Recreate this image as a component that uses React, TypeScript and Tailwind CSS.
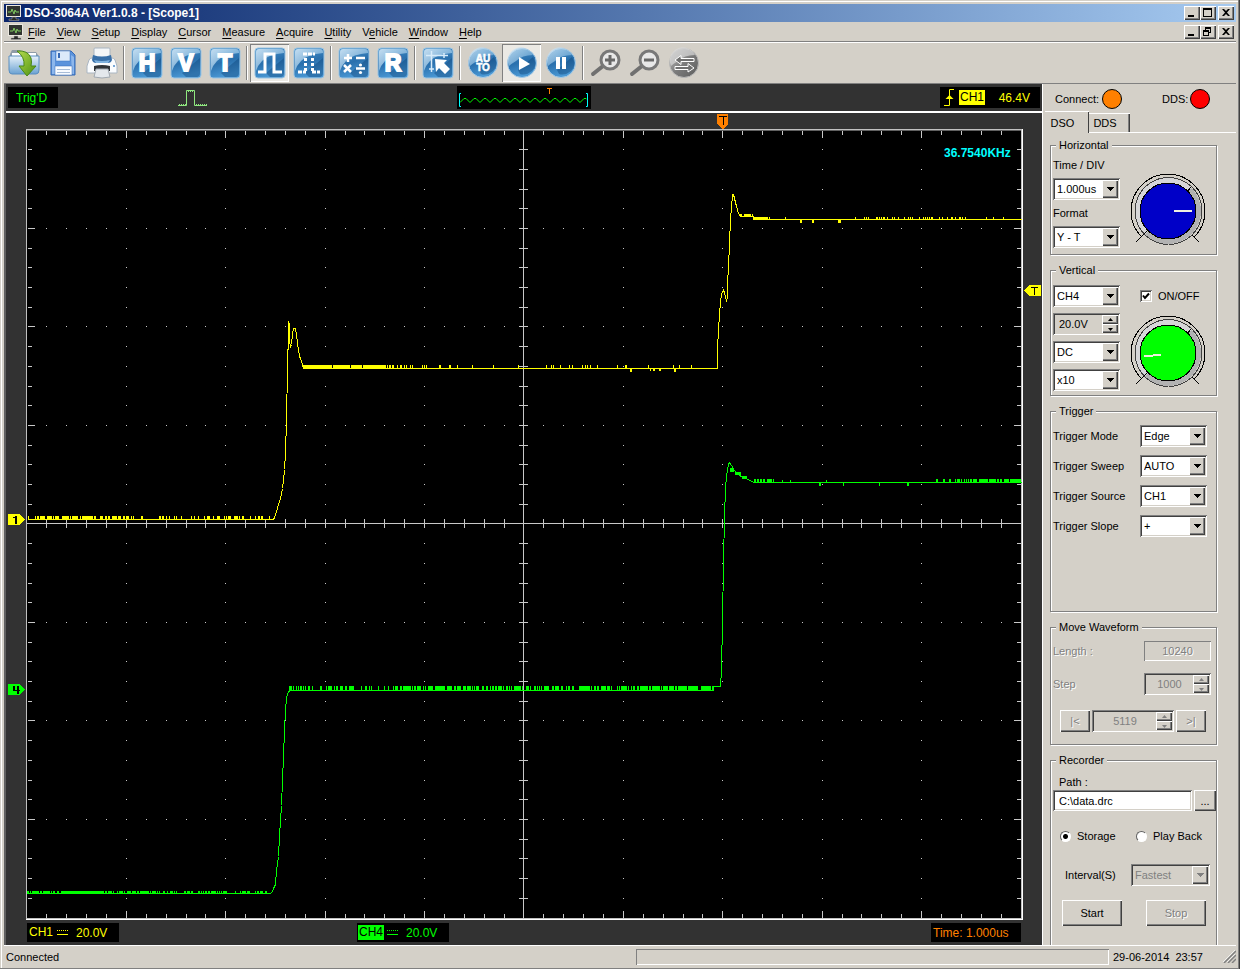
import { useState, useId } from 'react';
import type { ReactNode } from 'react';

const RAISED = 'bg-[#d4d0c8] shadow-[inset_1px_1px_0_#fff,inset_-1px_-1px_0_#404040,inset_-2px_-2px_0_#808080]';
const SUNKEN = 'shadow-[inset_1px_1px_0_#808080,inset_-1px_-1px_0_#fff,inset_2px_2px_0_#404040,inset_-2px_-2px_0_#d4d0c8]';
const ETCHED = 'text-[#808080] [text-shadow:1px_1px_0_#fff]';

/* ---------- graticule ---------- */

const gx = (k: number) => Math.floor(26.98 + 19.88 * k);
const gy = (k: number) => Math.floor(129.9 + 19.7 * k);

function buildGrid() {
  let ticks = '';
  let dots = '';
  for (let k = 1; k < 50; k++) {
    const x = gx(k);
    const len = k % 5 === 0 ? 7 : 4;
    ticks += `M${x} 131h1v${len}h-1zM${x} 918h1v${-len}h-1z`;
    if (k !== 25) ticks += `M${x} 519h1v9h-1z`;
    for (let j = 5; j < 40; j += 5) if (j !== 20) dots += `M${x} ${gy(j)}h1v1h-1z`;
  }
  for (let j = 1; j < 40; j++) {
    const y = gy(j);
    const len = j % 5 === 0 ? 7 : 4;
    ticks += `M28 ${y}h${len}v1h${-len}zM1021 ${y}h${-len}v1h${len}z`;
    if (j !== 20) ticks += `M519 ${y}h9v1h-9z`;
    for (let k = 5; k < 50; k += 5) if (k !== 25) dots += `M${gx(k)} ${y}h1v1h-1z`;
  }
  return ticks + dots;
}

// each run: from, to, height of the hash (negative = up), share of columns hit
type Run = [number, number, number, number];

function noise(y: number, runs: Run[], seed: number) {
  let s = seed;
  let d = '';
  for (const [from, to, h, share] of runs) {
    for (let x = from; x < to; x++) {
      s = (s * 1103515245 + 12345) % 2147483648;
      if (s / 2147483648 < share) d += `M${x} ${y}h1v${h}h-1z`;
    }
  }
  return d;
}

const GRID = buildGrid();

const CH1_TRACE =
  '27,519 273,519 274,517 276,511 278,504 280,498 281,493 282,488 283,480 284,469 285,453 286,420 287,368 288,331 288,321 289,325 289,340 290,346 291,344 292,334 293,328 295,328 296,334 297,343 298,350 299,355 300,359 301,360 302,365 303,368 717,368 717,348 718,330 719,314 720,302 721,293 722,292 723,290 724,292 725,297 726,300 727,297 727,284 728,266 729,243 730,219 731,207 732,194 733,194 734,198 736,206 738,213 740,216 753,216 754,219 1021,219';
const CH4_TRACE =
  '27,893 270,893 272,891 273,888 275,884 276,870 278,856 279,835 281,805 282,780 284,730 285,710 286,697 287,694 288,691 290,690 713,690 713,686 720,686 721,669 722,622 723,563 724,515 725,488 726,476 727,470 728,464 729,462 731,465 734,470 737,473 742,477 748,479 753,482 1021,482';

const CH1_NOISE =
  noise(520, [[27, 40, -4, 0.5], [40, 76, -4, 0.75], [76, 130, -4, 0.6], [130, 273, -4, 0.27]], 7) +
  noise(369, [[303, 360, -4, 0.97], [360, 385, -4, 0.92], [385, 407, -4, 0.5], [407, 440, -4, 0.25], [440, 715, -4, 0.07], [630, 632, 3, 1], [646, 661, 2, 0.5], [674, 676, 3, 1]], 21) +
  noise(217, [[740, 753, -3, 0.8]], 3) +
  noise(220, [[753, 768, -3, 0.9], [768, 790, -3, 0.15], [800, 802, 3, 1], [812, 814, 3, 1], [838, 841, 3, 1], [853, 878, -3, 0.1], [878, 970, -3, 0.38], [970, 1021, -3, 0.1]], 11);
const CH4_NOISE =
  noise(894, [[27, 62, -3, 0.6], [62, 100, -3, 1], [100, 160, -3, 0.75], [160, 270, -3, 0.45]], 5) +
  noise(691, [[288, 340, -5, 0.55], [340, 395, -5, 0.35], [395, 500, -5, 0.7], [500, 640, -5, 0.5], [640, 713, -5, 0.88]], 17) +
  noise(472, [[730, 734, -4, 1]], 9) +
  noise(475, [[735, 741, -3, 1]], 9) +
  noise(479, [[742, 747, -3, 1]], 9) +
  noise(483, [[753, 774, -4, 0.6], [774, 930, -3, 0.03], [819, 821, 3, 1], [843, 844, 3, 1], [879, 880, 3, 1], [907, 909, 3, 1], [930, 970, -4, 0.35], [970, 1021, -4, 0.8]], 13);

function Graticule() {
  return (
    <svg viewBox="6 113 1036 809" className="block w-full h-auto" shapeRendering="crispEdges" role="img" aria-label="Scope1 waveforms">
      <path d="M26 129h997v791h-997z" fill="#fff" />
      <path d="M26 129h996v790h-996z" fill="#c0c0c0" />
      <path d="M27 130h994v788h-994z" fill="#606060" />
      <path d="M27 131h994v787h-994z" fill="#000" />
      <path d={GRID} fill="#c8c8c8" />
      <path d="M27 523h994v1h-994zM523 130h1v788h-1z" fill="#c8c8c8" />
      <g transform="translate(.5 .5)" fill="none" strokeWidth="1">
        <polyline points={CH1_TRACE} stroke="#ff0" />
        <polyline points={CH4_TRACE} stroke="#0f0" />
      </g>
      <path d={CH1_NOISE} fill="#ff0" />
      <path d={CH4_NOISE} fill="#0f0" />

      {/* trigger and channel position markers */}
      <path d="M717 114h11v10l-5 5h-1l-5-5z" fill="#ff8000" />
      <path d="M719 116h8v1h-3v8h-1v-8h-4z" fill="#000" />
      <path d="M1024 290.500l5-5.500h12v11h-12z" fill="#ff0" />
      <path d="M1031 287h7v1h-3v7h-1v-7h-3z" fill="#000" />
      <path d="M8 514h12l5 5.500l-5 5.500h-12z" fill="#ff0" />
      <path d="M13 517h2v-1h2v8h-2v-6h-2z" fill="#000" />
      <path d="M8 684h12l5 5.500l-5 5.500h-12z" fill="#0f0" />
      <path d="M13 686h2v4h2v-4h2v4h1v1h-1v3h-2v-3h-4z" fill="#000" />
      <text x="944" y="157" fill="#0ff" fontSize="12" fontWeight="bold" shapeRendering="auto">36.7540KHz</text>
    </svg>
  );
}

/* ---------- icons ---------- */

function Monitor() {
  return (
    <svg width="16" height="16" viewBox="0 0 16 16" aria-hidden="true">
      <rect x="0.500" y="0.500" width="14" height="11" fill="#303430" stroke="#ece8e0" />
      <path d="M2 7h3l1-3 2 5 1-4 1 2h3" fill="none" stroke="#7fc860" strokeWidth="1" />
      <path d="M6 12h4v2h3v1.500H3V14h3z" fill="#282828" stroke="#aaa" strokeWidth=".5" />
    </svg>
  );
}

function Defs() {
  return (
    <svg width="0" height="0" className="absolute" aria-hidden="true">
      <defs>
        <linearGradient id="tile" x1="0" y1="0" x2="0.300" y2="1">
          <stop offset="0" stopColor="#4b97cf" />
          <stop offset="0.550" stopColor="#2a70ad" />
          <stop offset="1" stopColor="#4a98d4" />
        </linearGradient>
        <linearGradient id="gloss" x1="0" y1="0" x2="1" y2="1">
          <stop offset="0" stopColor="#e2f0fa" />
          <stop offset="1" stopColor="#5a9fd2" />
        </linearGradient>
        <linearGradient id="dim" x1="0" y1="0" x2="1" y2="1">
          <stop offset="0" stopColor="#c4c4c4" />
          <stop offset="0.500" stopColor="#7c7c7c" />
          <stop offset="1" stopColor="#5c5c5c" />
        </linearGradient>
        <linearGradient id="leaf" x1="0" y1="0" x2="1" y2="1">
          <stop offset="0" stopColor="#b6dc50" />
          <stop offset="1" stopColor="#4c9010" />
        </linearGradient>
        <linearGradient id="folder" x1="0" y1="0" x2="0" y2="1">
          <stop offset="0" stopColor="#e8f2fa" />
          <stop offset="1" stopColor="#6ba2d2" />
        </linearGradient>
        <linearGradient id="ring" x1="0" y1="0" x2="1" y2="1">
          <stop offset="0.500" stopColor="#d6d6d8" />
          <stop offset="0.500" stopColor="#b2b2b2" />
        </linearGradient>
      </defs>
    </svg>
  );
}

function Tile({ children }: { children: ReactNode }) {
  return (
    <svg width="32" height="32" viewBox="0 0 32 32" aria-hidden="true">
      <rect x="1" y="1" width="30" height="30" rx="3" fill="url(#tile)" stroke="#9cc4e2" />
      <path d="M2 5q0-3 3-3h22q3 0 3 3v1Q15 7 8 14 4 18 2 24z" fill="url(#gloss)" opacity=".8" />
      <path d="M12 26L30 11v15q0 3-3 4H16z" fill="#0a3f74" opacity=".4" />
      {children}
    </svg>
  );
}

function Orb({ children, dim }: { children: ReactNode; dim?: boolean }) {
  return (
    <svg width="32" height="32" viewBox="0 0 32 32" aria-hidden="true">
      <circle cx="16" cy="16" r="14.500" fill={dim ? 'url(#dim)' : 'url(#tile)'} stroke={dim ? '#b8b8b8' : '#a8cbe6'} />
      <path d="M3 19A13 13 0 0 1 27 8Q16 8 10 14 5 17 3 19z" fill={dim ? '#d8d8d8' : 'url(#gloss)'} opacity=".7" />
      {!dim && <path d="M12 23L27 10q5 8-1 14-6 5-12 3z" fill="#0a3f74" opacity=".4" />}
      {children}
    </svg>
  );
}

function Letter({ children }: { children: string }) {
  return (
    <Tile>
      <text x="16" y="24" textAnchor="middle" fill="#fff" stroke="#fff" strokeWidth="2" fontSize="23" fontWeight="bold">{children}</text>
    </Tile>
  );
}

function OpenIcon() {
  return (
    <svg width="32" height="32" viewBox="0 0 32 32" aria-hidden="true">
      <path d="M2 7l2-4h8l2 2h14l2 3v18H2z" fill="#8f9ca8" />
      <path d="M4 6h24v6H4z" fill="#fff" />
      <path d="M1 9h30v14q0 4-3 4H4q-3 0-3-4z" fill="url(#folder)" stroke="#5a8fc0" />
      <path d="M9 4q11-1 14 7 1 4 0 8h5l-9 10-8-10h5q1-9-7-15z" fill="url(#leaf)" stroke="#4a8818" />
    </svg>
  );
}

function SaveIcon() {
  return (
    <svg width="32" height="32" viewBox="0 0 32 32" aria-hidden="true">
      <path d="M4 4h20l4 4v20H4z" fill="#5b93dc" stroke="#3568b4" />
      <path d="M5 5h3v22H5zM24 8l3 2v17h-2z" fill="#8db7ec" />
      <rect x="9" y="4" width="14" height="10" fill="#dceafa" stroke="#3f74c0" strokeWidth=".5" />
      <rect x="11" y="6" width="2" height="5" fill="#3568b4" />
      <rect x="8" y="19" width="17" height="9" fill="#f8fbff" stroke="#3568b4" strokeWidth=".5" />
      <path d="M10 22.500h13M10 25.500h13" stroke="#a8bdd8" />
    </svg>
  );
}

function PrintIcon() {
  return (
    <svg width="32" height="32" viewBox="0 0 32 32" aria-hidden="true">
      <path d="M8 2q0-1 1-1h14q1 0 1 1v9H8z" fill="#f4f6f8" stroke="#a8b4c0" />
      <path d="M3 13q1-2 3-2h20q2 0 3 2l2 6v7H1v-7z" fill="#fafcfe" stroke="#aab6c2" />
      <path d="M7 8q9 3 18 0l1 5q-1 3-4 3H10q-3 0-4-3z" fill="#386fa8" />
      <path d="M8 13q8 2 16 0l-2 3H10z" fill="#7fb2de" />
      <path d="M8 19q8-2 16 0v5H8z" fill="#303438" />
      <path d="M10 22h12l2 8q-8 2-16 0z" fill="#e4e8ec" stroke="#a0a8b0" />
      <circle cx="28" cy="19" r="1" fill="#4f8dc8" />
    </svg>
  );
}

function Lens({ plus }: { plus?: boolean }) {
  return (
    <svg width="32" height="32" viewBox="0 0 32 32" aria-hidden="true">
      <path d="M13 19L3 27" stroke="#707070" strokeWidth="4" strokeLinecap="round" />
      <circle cx="20" cy="13" r="9" fill="#e8e8e8" stroke="#787878" strokeWidth="3" />
      <path d={plus ? 'M15 13h10M20 8v10' : 'M15 13h10'} stroke="#686868" strokeWidth="3" />
    </svg>
  );
}

type Tool = { label: string; icon: ReactNode; pressed?: boolean };

const TOOLS: Tool[][] = [
  [
    { label: 'Open', icon: <OpenIcon /> },
    { label: 'Save', icon: <SaveIcon /> },
    { label: 'Print', icon: <PrintIcon /> },
  ],
  [
    { label: 'Horizontal', icon: <Letter>H</Letter> },
    { label: 'Vertical', icon: <Letter>V</Letter> },
    { label: 'Trigger', icon: <Letter>T</Letter> },
  ],
  [
    { label: 'Pulse', pressed: true, icon: <Tile><path d="M4 25h7V7h9v18h8" fill="none" stroke="#fff" strokeWidth="3" /></Tile> },
    { label: 'Pulse width', icon: <Tile><path d="M5 25h8M19 25h8M10 7h12" fill="none" stroke="#fff" strokeWidth="3" strokeDasharray="4 1" /><path d="M12.500 11v13M19.500 11v13" stroke="#fff" strokeWidth="3" strokeDasharray="3 2" /></Tile> },
  ],
  [
    { label: 'Math', icon: <Tile><path d="M6 11h8M10 7v8M18 11h9M6 18l7 7M13 18l-7 7M18 21.500h9" stroke="#fff" strokeWidth="2.500" /><circle cx="22.500" cy="18" r="1.600" fill="#fff" /><circle cx="22.500" cy="25.500" r="1.600" fill="#fff" /></Tile> },
    { label: 'Reference', icon: <Letter>R</Letter> },
  ],
  [
    { label: 'Cursor', icon: <Tile><path d="M4 8.500h22M9.500 4v21" stroke="#d8ecfa" strokeWidth="1.500" /><path d="M22 6v5M7 22h5" stroke="#d8ecfa" strokeWidth="1.500" /><path d="M13 12l12 1-3 3 6 6-5 5-6-6-3 4z" fill="#fff" /></Tile> },
  ],
  [
    { label: 'Auto', icon: <Orb><text x="16" y="15" textAnchor="middle" fill="#fff" stroke="#fff" strokeWidth=".5" fontSize="10" fontWeight="bold">AU</text><text x="16" y="24" textAnchor="middle" fill="#fff" stroke="#fff" strokeWidth=".5" fontSize="10" fontWeight="bold">TO</text></Orb> },
    { label: 'Run', pressed: true, icon: <Orb><path d="M13 10l11 7-11 6z" fill="#fff" /></Orb> },
    { label: 'Pause', icon: <Orb><path d="M11 10h4v12h-4zM17 10h4v12h-4z" fill="#fff" /></Orb> },
  ],
  [
    { label: 'Zoom in', icon: <Lens plus /> },
    { label: 'Zoom out', icon: <Lens /> },
    { label: 'Swap', icon: <Orb dim><path d="M26 14.500V11.500H13V8.500l-6 4.500 6 4.500V14.500zM7 19.500v3h13v2.500l6-4-6-4.500v3z" fill="#707070" stroke="#fff" /></Orb> },
  ],
];

const MENUS = ['File', 'View', 'Setup', 'Display', 'Cursor', 'Measure', 'Acquire', 'Utility', 'Vehicle', 'Window', 'Help'];

const GLYPHS: Record<string, string> = {
  Minimize: 'M4 9h6v2h-6z',
  Maximize: 'M3 2h9v9h-9zM4 4v6h7v-6z',
  Restore: 'M5 2h6v6h-2v3h-6v-6h2zM6 4v1h3v2h1v-3zM4 7v3h4v-3z',
  Close: 'M4 3h2l2 2 2-2h2l-3 3.500 3 3.500h-2l-2-2-2 2h-2l3-3.500z',
};

function WindowButtons({ middle }: { middle: string }) {
  return (
    <div className="ml-auto flex items-center pr-[2px]">
      {['Minimize', middle, 'Close'].map((g) => (
        <button key={g} aria-label={g} className={`w-4 h-[14px] ${g === 'Close' ? 'ml-[2px]' : ''} ${RAISED}`}>
          <svg width="16" height="14" viewBox="0 0 16 14"><path d={GLYPHS[g]} fillRule="evenodd" /></svg>
        </button>
      ))}
    </div>
  );
}

/* ---------- form controls ---------- */

function Select({ label, options, width = 'w-[67px]', disabled }: { label: string; options: string[]; width?: string; disabled?: boolean }) {
  return (
    <div className={`relative h-[22px] ${width}`}>
      <select aria-label={label} disabled={disabled}
        className={`appearance-none block w-full h-full pl-1 rounded-none outline-none ${disabled ? 'bg-[#d4d0c8] text-[#808080] opacity-100' : 'bg-white text-black'} ${SUNKEN}`}>
        {options.map((o) => <option key={o}>{o}</option>)}
      </select>
      <span className={`absolute right-[2px] top-[2px] w-4 h-[18px] flex items-center justify-center pointer-events-none ${RAISED}`}>
        <svg width="7" height="4" viewBox="0 0 7 4" shapeRendering="crispEdges"><path d="M0 0h7L3.500 4z" fill={disabled ? '#808080' : '#000'} /></svg>
      </span>
    </div>
  );
}

function Spin({ label, value, width = 'w-[67px]', disabled }: { label: string; value: string; width?: string; disabled?: boolean }) {
  return (
    <div className={`flex h-[22px] p-[2px] ${width} ${SUNKEN}`}>
      <input aria-label={label} defaultValue={value} disabled={disabled}
        className={`min-w-0 flex-1 outline-none bg-transparent ${disabled ? 'text-center text-[#808080]' : 'pl-1'}`} />
      <div className="flex flex-col w-4">
        {['M0 3h5L2.500 0z', 'M0 1h5L2.500 4z'].map((d, i) => (
          <button key={d} disabled={disabled} aria-label={`${label} ${i ? 'down' : 'up'}`} className={`flex-1 flex items-center justify-center ${RAISED}`}>
            <svg width="5" height="4" viewBox="0 0 5 4"><path d={d} fill={disabled ? '#808080' : '#000'} /></svg>
          </button>
        ))}
      </div>
    </div>
  );
}

function Group({ title, className, children }: { title: string; className: string; children: ReactNode }) {
  return (
    <fieldset className={`min-w-0 border border-[#808080] shadow-[1px_1px_0_#fff,inset_1px_1px_0_#fff] ${className}`}>
      <legend className="ml-[5px] px-[3px] h-[14px] bg-[#d4d0c8]">{title}</legend>
      {children}
    </fieldset>
  );
}

function Knob({ color, hand }: { color: string; hand: string }) {
  return (
    <svg width="76" height="72" viewBox="0 0 76 72" shapeRendering="crispEdges" aria-hidden="true">
      <circle cx="38" cy="38" r="33" fill="url(#ring)" />
      <g fill="none" stroke="#000" strokeWidth="1">
        <path d="M11.800 64.200A37 37 0 1 1 64.200 64.200" />
        <path d="M38 71.500A33.500 33.500 0 1 1 39 71.500" stroke="#404040" />
        <path d="M6 69l12-12M62 62l7 7M57 19l4-5" />
      </g>
      <circle cx="38" cy="38" r="28" fill={color} stroke="#000" />
      <path d={hand} fill="none" stroke="#f0f0e0" strokeWidth="2" />
    </svg>
  );
}

function Lamp({ color }: { color: string }) {
  return (
    <svg width="20" height="20" viewBox="0 0 20 20" aria-hidden="true">
      <circle cx="10" cy="10" r="9.500" fill={color} stroke="#000" />
    </svg>
  );
}

function ChannelInfo({ name, color, nameStyle }: { name: string; color: string; nameStyle: string }) {
  return (
    <div className={`flex items-center w-[92px] h-[19px] pl-[1px] bg-black text-xs ${color}`}>
      <span className={`px-[1px] leading-[15px] ${nameStyle}`}>{name}</span>
      <svg width="11" height="6" viewBox="0 0 11 6" className="ml-[3px] mr-2" shapeRendering="crispEdges" aria-hidden="true">
        <path d="M0 .5h11" stroke="currentColor" strokeDasharray="1 1" />
        <path d="M0 4.500h11" stroke="currentColor" />
      </svg>
      <span>20.0V</span>
    </div>
  );
}

function SidePanel() {
  const [enabled, setEnabled] = useState(true);
  const [mode, setMode] = useState('Storage');
  const id = useId();

  return (
    <aside className="w-[194px] shrink-0 flex flex-col border-l border-white">
      <div className="flex items-center h-[27px] pl-3 pt-[2px]">
        <span className="w-[47px]">Connect:</span>
        <Lamp color="#ff8000" />
        <span className="ml-10 w-7">DDS:</span>
        <Lamp color="#ff0000" />
      </div>

      {/* Tabs */}
      <div role="tablist" className="flex items-end h-[22px] pl-[2px]">
        <button role="tab" aria-selected="true" className="w-11 h-[22px] pr-[9px] border-t border-white shadow-[inset_-1px_0_0_#404040]">DSO</button>
        <button role="tab" aria-selected="false" className="w-[41px] h-5 pr-[9px] border-t border-b border-white shadow-[inset_-1px_0_0_#404040,inset_-2px_0_0_#808080]">DDS</button>
        <span className="flex-1 border-b border-white" />
      </div>

      <div className="flex-1 flex flex-col gap-2 pt-[5px] pl-[7px] pr-[19px]">
        <Group title="Horizontal" className="h-[117px]">
          <div className="flex pl-[2px] pt-[6px]">
            <div className="flex flex-col gap-[6px]">
              <span className="h-[14px]">Time / DIV</span>
              <Select label="Time / DIV" options={['1.000us', '2.000us', '5.000us']} />
              <span className="h-[14px]">Format</span>
              <Select label="Format" options={['Y - T', 'X - Y']} />
            </div>
            <div className="pt-[15px] pl-[10px]"><Knob color="#0000c8" hand="M44 38h18" /></div>
          </div>
        </Group>

        <Group title="Vertical" className="h-[133px]">
          <div className="flex pl-[2px] pt-2">
            <div className="flex flex-col gap-[6px]">
              <Select label="Channel" options={['CH4', 'CH1', 'CH2', 'CH3']} />
              <Spin label="Volts per division" value="20.0V" />
              <Select label="Coupling" options={['DC', 'AC', 'GND']} />
              <Select label="Probe" options={['x10', 'x1', 'x100']} />
            </div>
            <div className="pl-[10px]">
              <label className="flex items-center gap-[6px] pl-[10px] h-[22px]">
                <input type="checkbox" checked={enabled} onChange={(e) => setEnabled(e.target.checked)} className="peer sr-only" />
                <span className={`w-3 h-3 flex items-center justify-center bg-white ${SUNKEN}`}>
                  {enabled && <svg width="8" height="8" viewBox="0 0 8 8"><path d="M1 3.500l2 2.500 4-4.500" fill="none" stroke="#000" strokeWidth="2" /></svg>}
                </span>
                ON/OFF
              </label>
              <div className="pt-2"><Knob color="#00ff00" hand="M14 41h8l2-1h7" /></div>
            </div>
          </div>
        </Group>

        <Group title="Trigger" className="h-[208px]">
          <div className="flex flex-col gap-2 pt-[7px] pl-[2px] pr-[9px]">
            {[
              ['Trigger Mode', 'Edge'],
              ['Trigger Sweep', 'AUTO'],
              ['Trigger Source', 'CH1'],
              ['Trigger Slope', '+'],
            ].map(([label, value]) => (
              <div key={label} className="flex items-center justify-between">
                <span>{label}</span>
                <Select label={label} options={[value]} />
              </div>
            ))}
          </div>
        </Group>

        <Group title="Move Waveform" className="h-[125px]">
          <div className="flex flex-col pl-[2px] pr-[5px] pt-[7px]">
            <div className={`flex items-center justify-between ${ETCHED}`}>
              <label htmlFor={`${id}-length`}>Length :</label>
              <input id={`${id}-length`} disabled defaultValue="10240" className={`w-[67px] h-5 text-center bg-transparent shadow-[inset_1px_1px_0_#808080,inset_-1px_-1px_0_#fff] ${ETCHED}`} />
            </div>
            <div className="flex items-center justify-between mt-3">
              <span className={ETCHED}>Step</span>
              <Spin label="Step" value="1000" disabled />
            </div>
            <div className="flex gap-[2px] mt-[15px] pl-[7px]">
              <button disabled className={`w-[30px] h-[22px] ${RAISED} ${ETCHED}`}>|&lt;</button>
              <Spin label="Position" value="5119" width="w-[82px]" disabled />
              <button disabled className={`w-[30px] h-[22px] ${RAISED} ${ETCHED}`}>&gt;|</button>
            </div>
          </div>
        </Group>

        <fieldset className="flex-1 min-w-0 border border-b-0 border-[#808080] shadow-[1px_0_0_#fff,inset_1px_1px_0_#fff]">
          <legend className="ml-[5px] px-[3px] h-[14px] bg-[#d4d0c8]">Recorder</legend>
          <label htmlFor={`${id}-path`} className="block pl-2 pt-2 h-[23px]">Path :</label>
          <div className="flex pl-[2px] gap-[2px]">
            <input id={`${id}-path`} defaultValue="C:\data.drc" className={`min-w-0 flex-1 h-[21px] pl-[6px] bg-white outline-none ${SUNKEN}`} />
            <button aria-label="Browse" className={`w-[22px] h-[21px] ${RAISED}`}>...</button>
          </div>
          <div className="flex mt-[18px] pl-[9px]">
            {['Storage', 'Play Back'].map((m) => (
              <label key={m} className="flex items-center gap-[6px] w-[76px] whitespace-nowrap">
                <input type="radio" name={`${id}-mode`} checked={mode === m} onChange={() => setMode(m)}
                  className="appearance-none w-[11px] h-[11px] rounded-full shrink-0 bg-white border border-[#606060] border-b-white border-r-white checked:bg-[radial-gradient(circle,#000_2px,#fff_3px)]" />
                {m}
              </label>
            ))}
          </div>
          <div className="flex items-center justify-between mt-[21px] pl-[14px] pr-[6px]">
            <span>Interval(S)</span>
            <Select label="Interval(S)" options={['Fastest']} width="w-[79px]" disabled />
          </div>
          <div className="flex justify-between mt-[14px] pl-[11px] pr-[10px]">
            <button className={`w-[60px] h-[26px] ${RAISED}`}>Start</button>
            <button disabled className={`w-[60px] h-[26px] ${RAISED} ${ETCHED}`}>Stop</button>
          </div>
        </fieldset>
      </div>
    </aside>
  );
}

export default function App() {
  return (
    <div className={`min-h-screen flex flex-col px-1 pt-1 pb-[3px] text-[11px] leading-[14px] text-black font-['Liberation_Sans',Arial,sans-serif] bg-[#d4d0c8] shadow-[inset_-1px_-1px_0_#404040,inset_-2px_-2px_0_#808080,inset_1px_1px_0_#d4d0c8,inset_2px_2px_0_#fff]`}>
      <Defs />

      {/* Title bar */}
      <header className="flex items-center h-[18px] pl-[2px] bg-linear-to-r from-[#0a246a] to-[#a6caf0]">
        <Monitor />
        <h1 className="ml-[2px] text-xs font-bold text-white">DSO-3064A Ver1.0.8 - [Scope1]</h1>
        <WindowButtons middle="Maximize" />
      </header>

      {/* Menu bar */}
      <nav className="flex items-center h-5 pl-1 border-b border-[#808080]">
        <Monitor />
        <div className="flex gap-[11px] ml-1">
          {MENUS.map((m) => {
            // Vehicle takes its second letter, V belongs to View
            const at = m === 'Vehicle' ? 1 : 0;
            return (
              <button key={m}>{m.slice(0, at)}<span className="underline underline-offset-2">{m[at]}</span>{m.slice(at + 1)}</button>
            );
          })}
        </div>
        <WindowButtons middle="Restore" />
      </nav>

      {/* Toolbar */}
      <div className="flex items-center h-[42px] border-t border-b border-t-white border-b-[#808080]">
        {TOOLS.map((group, i) => (
          <div key={i} className="flex items-center">
            {i > 0 && <span className="w-[6px] h-[34px] flex justify-center"><span className="w-[2px] bg-[#808080] border-r border-white" /></span>}
            {group.map((t) => (
              <button key={t.label} aria-label={t.label} aria-pressed={t.pressed}
                className={`w-[39px] h-[38px] flex items-center justify-center ${t.pressed ? 'bg-[#ebe9e4] shadow-[inset_1px_1px_0_#808080,inset_-1px_-1px_0_#fff]' : ''}`}>
                {t.icon}
              </button>
            ))}
          </div>
        ))}
      </div>

      <main className="flex-1 flex">
        <section className="flex-1 min-w-0 flex flex-col border-l-2 border-[#606060] bg-[#323232]">
          <div className="flex items-center h-[29px] pl-[2px] pr-[2px] border-b-2 border-white text-xs">
            <div className="w-[50px] h-[21px] pl-2 bg-black text-[#00ff00] leading-[22px]">Trig'D</div>
            <svg width="30" height="18" viewBox="0 0 30 18" className="ml-[120px]" aria-hidden="true">
              <path d="M0 16.500h8.500V1.500h8v15H29" fill="none" stroke="#90e880" strokeWidth="1" />
              <path d="M1 15.500h7M10 2.500h6M18 15.500h11" stroke="#90e880" strokeDasharray="1 1" />
            </svg>
            <svg width="134" height="23" viewBox="0 0 134 23" className="ml-[249px] bg-black" aria-hidden="true">
              <path d={'M3 16.5' + Array.from({ length: 12 }, () => 'l4-4h2l4 4').join('') + 'l4-4h2l1 1'} fill="none" stroke="#0f0" />
              <path d="M4 7.500h-1.500v13h1.500M129 7.500h1.500v13h-1.500" fill="none" stroke="#0ff" />
              <path d="M90 2h5v1h-2v5h-1v-5h-2z" fill="#ff8000" />
            </svg>
            <div className="ml-auto flex items-center w-[100px] h-[21px] pl-1 pr-[10px] bg-black text-[#ffff00]">
              <svg width="11" height="17" viewBox="0 0 11 17" aria-hidden="true">
                <path d="M0 16.500h5.500V.5H10" fill="none" stroke="currentColor" />
                <path d="M5.500 6l4 4h-8z" fill="currentColor" />
              </svg>
              <span className="ml-1 px-[1px] bg-[#ffff00] text-black leading-[15px]">CH1</span>
              <span className="ml-auto">46.4V</span>
            </div>
          </div>

          <Graticule />

          <div className="flex items-start pl-[21px] pr-[21px] pt-[1px] pb-[3px]">
            <ChannelInfo name="CH1" color="text-[#ffff00]" nameStyle="" />
            <div className="ml-[238px]">
              <ChannelInfo name="CH4" color="text-[#00ff00]" nameStyle="bg-[#00ff00] text-black" />
            </div>
            <div className="ml-auto w-[90px] h-[19px] pl-[2px] bg-black text-xs leading-[20px] text-[#ff8000]">Time: 1.000us</div>
          </div>
        </section>

        <SidePanel />
      </main>

      {/* Status bar */}
      <footer className="flex items-center h-[22px] pl-[2px] border-t border-white">
        <span className="flex-1">Connected</span>
        <span className="w-[473px] h-4 shadow-[inset_1px_1px_0_#808080,inset_-1px_-1px_0_#fff]" />
        <span className="w-[114px] pl-1 whitespace-pre">29-06-2014  23:57</span>
        <svg width="13" height="13" viewBox="0 0 13 13" aria-hidden="true">
          <path d="M1 13L13 1M5 13l8-8M9 13l4-4" stroke="#808080" strokeWidth="1.500" />
          <path d="M0 12L12 0M4 12l8-8" stroke="#fff" strokeWidth=".7" />
        </svg>
      </footer>
    </div>
  );
}
